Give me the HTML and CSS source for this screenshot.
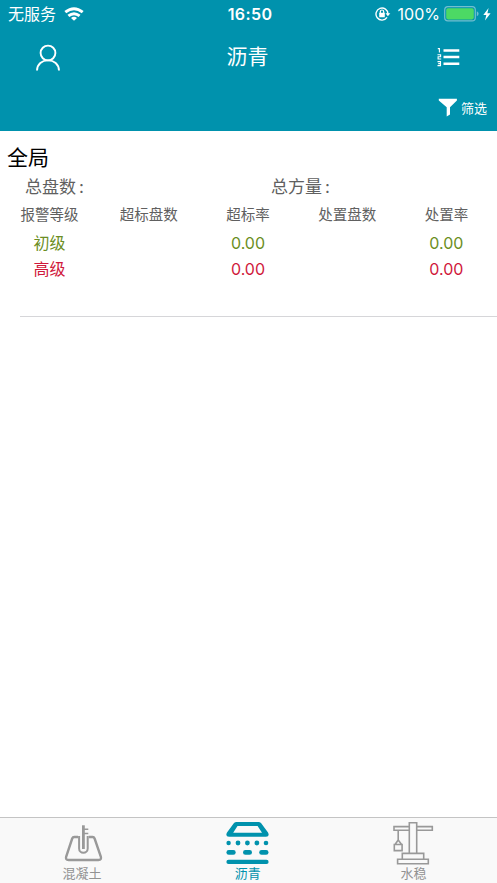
FILE: index.html
```html
<!DOCTYPE html>
<html lang="zh-CN">
<head>
<meta charset="utf-8">
<title>沥青</title>
<link rel="stylesheet" href="styles.css">
</head>
<body>
<div class="app">
  <header class="header">
    <div class="status">
      <div class="status-left">
        <span>无服务</span>
        <svg class="wifi" width="20" height="14" viewBox="0 0 20 14" fill="none" stroke="#fff" stroke-width="2.9">
          <path d="M1.3 5.2Q10-1.9 18.7 5.2"/>
          <path d="M4.4 8.9Q10 4.4 15.6 8.9"/>
          <path d="M10 13.8 7 10.9Q10 8.6 13 10.9Z" fill="#fff" stroke="none"/>
        </svg>
      </div>
      <div class="status-time">16:50</div>
      <div class="status-right">
        <svg class="lock" width="16" height="14" viewBox="0 0 16 14" fill="none" stroke="#fff">
          <path d="M12 10.4A6 6 0 1 1 13 7" stroke-width="1.4"/>
          <path d="M10.5 6.3h4.8l-2.4 3z" fill="#fff" stroke="none"/>
          <path d="M5.3 6V4.7a1.7 1.7 0 0 1 3.4 0V6" stroke-width="1.2"/>
          <rect x="4.2" y="5.8" width="5.6" height="4.4" rx=".5" fill="#fff" stroke="none"/>
        </svg>
        <span class="percent">100%</span>
        <svg class="battery" width="35" height="16" viewBox="0 0 35 16">
          <rect x=".7" y=".7" width="30.6" height="14.2" rx="3.2" fill="none" stroke="#73bfd0" stroke-width="1.2"/>
          <rect x="2.2" y="2.2" width="27.6" height="11.2" rx="1.8" fill="#4cd964"/>
          <path d="M32.8 5.3q1.8.6 1.8 2.5t-1.8 2.5z" fill="#73bfd0"/>
        </svg>
        <svg class="bolt" width="8" height="13" viewBox="0 0 8 13"><path d="M5.6 0 .3 7h3L2 12.5 7.6 5.2H4.4z" fill="#fff"/></svg>
      </div>
    </div>
    <div class="nav">
      <svg class="person" width="26" height="28" viewBox="0 0 26 28" fill="none" stroke="#fff" stroke-width="1.9">
        <circle cx="13" cy="9" r="7.4"/>
        <path d="M2 26.5C2.2 20 7 16.4 13 16.4S23.8 20 24 26.5"/>
      </svg>
      <h1 class="title">沥青</h1>
      <svg class="list" width="23" height="20" viewBox="0 0 23 20" fill="none" stroke="#fff">
        <path d="M6.5 3.6H22.3M6.5 10H22.3M6.5 16.8H22.3" stroke-width="2.5"/>
        <path d="M.8 1.6H2.4V5.4M.5 7.7H3.6V9.8H1.1V12H4.2M.5 14.6H3.5V18.6H.5M1.2 16.6H3.5" stroke-width="1.1"/>
      </svg>
    </div>
    <div class="filter">
      <svg width="20" height="19" viewBox="0 0 20 19"><path d="M.8.8h18.1v1.7L12 9.3v7.2l-3.3 2.1V9.3L.8 2.5z" fill="#fff"/></svg>
      <span>筛选</span>
    </div>
  </header>

  <main class="content">
    <h2 class="section">全局</h2>
    <div class="totals"><span>总盘数<span class="colon">:</span></span><span>总方量<span class="colon">:</span></span></div>
    <div class="row head"><span>报警等级</span><span>超标盘数</span><span>超标率</span><span>处置盘数</span><span>处置率</span></div>
    <div class="row low"><span>初级</span><span></span><span>0.00</span><span></span><span>0.00</span></div>
    <div class="row high"><span>高级</span><span></span><span>0.00</span><span></span><span>0.00</span></div>
    <div class="divider"></div>
  </main>

  <nav class="tabs">
    <div class="tab">
      <svg width="44" height="44" viewBox="0 0 44 44" fill="none" stroke="#999" stroke-width="2">
        <path d="M17 16H13.2Q11.8 16 11.2 17.5L5.2 35.5Q4.2 39 7.5 39H37.5Q40.8 39 39.8 35.5L33.6 17.5Q33 16 31.6 16H27.7" stroke-width="2.4"/>
        <path d="M18.1 15V27.5a4.3 4.3 0 0 0 8.6 0V15"/>
        <path d="M22.4 4.3V28" stroke-width="2.8"/>
        <path d="M23 8.3h4.3M23 12.5h4.3" stroke-width="1.5"/>
      </svg>
      <span>混凝土</span>
    </div>
    <div class="tab active">
      <svg width="44" height="44" viewBox="0 0 44 44" fill="#0092ad">
        <path fill-rule="evenodd" d="M10.6 1H32.4Q34 1 35 2.1L42 11.5Q44 15.7 40 15.7H3Q-1 15.7 1 11.5L8 2.1Q9 1 10.6 1ZM11.5 5 7.2 11.7H36L31.6 5Z"/>
        <circle cx="2.6" cy="22" r="2.2"/><circle cx="12" cy="22" r="2.4"/><circle cx="21.4" cy="22" r="2.4"/><circle cx="30.9" cy="22" r="2.4"/><circle cx="40" cy="22" r="2.3"/>
        <rect x=".4" y="29" width="9.3" height="4.8" rx="2.4"/><rect x="17" y="29" width="9" height="4.8" rx="2.4"/><rect x="33.2" y="29" width="9.3" height="4.8" rx="2.4"/>
        <rect x=".4" y="38.8" width="42.2" height="4.2" rx="2.1"/>
      </svg>
      <span>沥青</span>
    </div>
    <div class="tab">
      <svg width="44" height="44" viewBox="0 0 44 44" fill="none" stroke="#999" stroke-width="1.6">
        <path d="M17.3 5.6H2V9.2H17.3M24.7 5.6H40.3V9.2H24.7"/>
        <path d="M17.3 32V1.7H24.7V32"/>
        <path d="M10.3 38.3V32.4H31.7V38.3M5.6 38.3H36.3V42.7H5.6Z"/>
        <path d="M6.2 9.5V19.5M6.2 19 3.2 23.3M6.2 19 9.4 23.3M2.3 23.5H10.1V29.6H2.3Z"/>
      </svg>
      <span>水稳</span>
    </div>
  </nav>
</div>
</body>
</html>
```
FILE: styles.css
```css
* { box-sizing: border-box; }

body {
  margin: 0;
  font-family: Inter, "Noto Sans CJK SC", sans-serif;
  font-weight: 400;
  background: #fff;
}

svg { display: block; flex: none; }

.app {
  display: flex;
  flex-direction: column;
  height: 883px;
}

.header {
  height: 131px;
  background: #0092ad;
  color: #fff;
}

.status {
  display: grid;
  grid-template-columns: 1fr auto 1fr;
  align-items: center;
  height: 28px;
  padding: 0 6px 0 8px;
  font-size: 16px;
  line-height: 28px;
}

.status-left, .status-right { display: flex; align-items: center; }
.status-right { justify-content: flex-end; }
.wifi { margin-left: 8px; }
.status-time { padding-left: 1px; font-weight: 600; letter-spacing: .4px; }
.percent { margin: 0 4px 0 7px; font-size: 16px; }
.bolt { margin-left: 4px; }

.nav {
  display: grid;
  grid-template-columns: 1fr auto 1fr;
  align-items: center;
  height: 57px;
  padding: 0 37px 0 35px;
}

.title { margin: 0; font-size: 21px; font-weight: 400; line-height: 57px; }
.person { margin-top: 2px; }
.list { justify-self: end; margin-top: 1px; }

.filter {
  display: flex;
  justify-content: flex-end;
  align-items: center;
  gap: 3px;
  height: 45px;
  padding-right: 10px;
  font-size: 13px;
}

.content { flex: 1; padding-top: 11px; }

.section {
  margin: 0 0 0 7px;
  font-size: 21px;
  font-weight: 400;
  line-height: 32px;
  color: #000;
}

.totals {
  display: grid;
  grid-template-columns: 246px 1fr;
  padding-left: 25px;
  font-size: 17px;
  line-height: 27px;
  color: #606060;
}

.colon { padding-left: 3px; }

.row {
  display: grid;
  grid-template-columns: repeat(5, 1fr);
  height: 26px;
  padding-right: 1px;
  font-size: 16px;
  line-height: 27px;
  text-align: center;
}

.head { height: 29px; font-size: 14.5px; line-height: 28px; color: #606060; }
.low { color: #6b8e23; }
.high { color: #d0193c; }
.divider { height: 1px; margin: 34px 0 0 20px; background: #d6d6d9; }

.tabs {
  display: grid;
  grid-template-columns: repeat(3, 1fr);
  height: 66px;
  border-top: 1px solid #c4c4c4;
  background: #f9f9f9;
}

.tab {
  display: flex;
  flex-direction: column;
  align-items: center;
  padding-top: 3px;
  font-size: 13px;
  line-height: 17px;
  color: #929292;
}

.tab span { margin-right: 1.5px; }
.active { color: #0092ad; }
```
